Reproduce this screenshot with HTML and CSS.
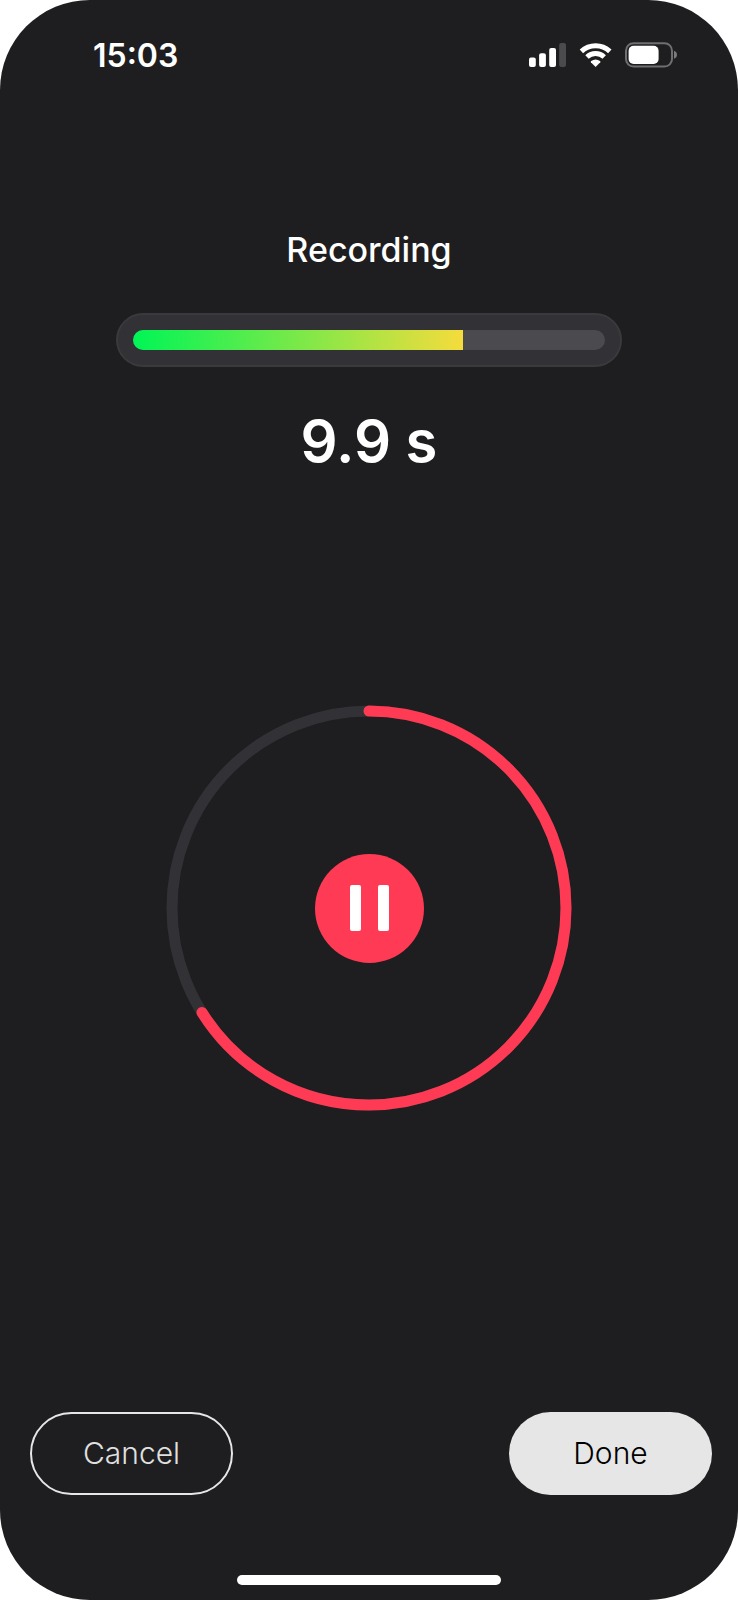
FILE: index.html
```
<!DOCTYPE html>
<html lang="en">
<head>
<meta charset="utf-8">
<meta name="viewport" content="width=device-width, initial-scale=1">
<title>Recording</title>
<link rel="stylesheet" href="styles.css">
</head>
<body>
<div class="screen">
  <header class="status-bar">
    <time class="clock">15:03</time>
    <div class="status-icons">
      <svg class="icon-signal" width="38" height="26" viewBox="0 0 38 26" aria-hidden="true">
        <rect x="0" y="15.4" width="6.8" height="9.6" rx="2"/>
        <rect x="10.1" y="11.2" width="6.8" height="13.8" rx="2"/>
        <rect x="20.2" y="6" width="6.8" height="19" rx="2"/>
        <rect class="dim" x="30.2" y="1" width="6.8" height="24" rx="2"/>
      </svg>
      <svg class="icon-wifi" width="34" height="26" viewBox="0 0 34 26" aria-hidden="true">
        <path class="arc" d="M2.4 9.3A20.8 20.8 0 0 1 30.8 9.3"/>
        <path class="arc" d="M8 15A12.6 12.6 0 0 1 25.2 15"/>
        <path d="M16.6 25 11.9 20.3Q11.5 19.7 12.2 19.1A7.4 7.4 0 0 1 21 19.1Q21.7 19.7 21.3 20.3Z"/>
      </svg>
      <svg class="icon-battery" width="52" height="26" viewBox="0 0 52 26" aria-hidden="true">
        <rect class="shell" x="1" y="1.2" width="46" height="23.4" rx="7.5"/>
        <rect x="3.6" y="3.8" width="30" height="18.2" rx="5"/>
        <path class="nub" d="M49 8.8Q52 10 52 12.8T49 16.8Z"/>
      </svg>
    </div>
  </header>

  <main class="recorder">
    <h1 class="title">Recording</h1>
    <div class="level" role="meter" aria-label="Input level" aria-valuemin="0" aria-valuemax="100" aria-valuenow="70">
      <div class="level-track">
        <div class="level-fill" style="width: 70%"></div>
      </div>
    </div>
    <p class="elapsed">9.9 s</p>

    <div class="dial">
      <svg class="dial-ring" viewBox="0 0 406 406" aria-hidden="true">
        <circle class="ring-track" cx="203" cy="203" r="197"/>
        <circle class="ring-value" cx="203" cy="203" r="197" pathLength="100" stroke-dasharray="66.1 100" transform="rotate(-90 203 203)"/>
      </svg>
      <button class="pause" type="button" aria-label="Pause">
        <span class="pause-bar"></span>
        <span class="pause-bar"></span>
      </button>
    </div>
  </main>

  <footer class="actions">
    <button class="action action-outline" type="button">Cancel</button>
    <button class="action action-solid" type="button">Done</button>
  </footer>
  <div class="home-indicator"></div>
</div>
</body>
</html>
```
FILE: styles.css
```
* {
  box-sizing: border-box;
}

body {
  margin: 0;
  background: #fff;
  font-family: Inter, "Liberation Sans", sans-serif;
  color: #fff;
}

button {
  padding: 0;
  border: 0;
  font: inherit;
  cursor: pointer;
}

.screen {
  display: flex;
  flex-direction: column;
  min-height: 100vh;
  border-radius: 90px;
  background: #1e1e20;
}

.status-bar {
  display: flex;
  align-items: flex-start;
  justify-content: space-between;
  padding: 35px 61px 0 93px;
}

.clock {
  font-size: 32px;
  font-weight: 600;
  line-height: 42px;
}

.status-icons {
  display: flex;
  align-items: center;
  gap: 12px;
  height: 40px;
  fill: #fff;
}

.dim {
  fill: #4b4b4d;
}

.arc {
  fill: none;
  stroke: #fff;
  stroke-width: 5;
}

.shell {
  fill: none;
  stroke: #6f6f71;
  stroke-width: 2;
}

.nub {
  fill: #7b7b7d;
}

.recorder {
  display: flex;
  flex-direction: column;
  align-items: center;
  padding: 152px 116px 48px;
}

.title {
  margin: 0;
  font-size: 34px;
  font-weight: 500;
  line-height: 42px;
}

.level {
  width: 100%;
  margin-top: 42px;
  padding: 15px;
  border: 2px solid #3a3a3d;
  border-radius: 27px;
  background: #323136;
}

.level-track {
  height: 20px;
  overflow: hidden;
  border-radius: 10px;
  background: #4b4a4f;
}

.level-fill {
  height: 100%;
  background: linear-gradient(90deg, #00f556, #f5dc3c);
}

.elapsed {
  margin: 38px 0 0;
  font-size: 58px;
  font-weight: 600;
  line-height: 72px;
}

.dial {
  display: grid;
  place-items: center;
  width: 100%;
  max-width: 406px;
  margin-top: 228px;
}

.dial > * {
  grid-area: 1 / 1;
}

.dial-ring {
  display: block;
  width: 100%;
}

.ring-track,
.ring-value {
  fill: none;
  stroke: #323136;
  stroke-width: 11;
}

.ring-value {
  stroke: #ff3a54;
  stroke-linecap: round;
}

.pause {
  display: flex;
  align-items: center;
  justify-content: center;
  gap: 17px;
  width: 109px;
  height: 109px;
  border-radius: 50%;
  background: #ff3a54;
}

.pause-bar {
  width: 11px;
  height: 46px;
  border-radius: 2px;
  background: #fff;
}

.actions {
  display: flex;
  justify-content: space-between;
  margin-top: auto;
  padding: 0 26px 0 30px;
}

.action {
  width: 203px;
  height: 83px;
  padding-bottom: 2px;
  border-radius: 42px;
  font-size: 30px;
  font-weight: 300;
}

.action-outline {
  border: 2px solid #e6e6e6;
  background: transparent;
  color: #e0e0e0;
}

.action-solid {
  background: #e6e6e6;
  color: #000;
}

.home-indicator {
  width: 264px;
  height: 10px;
  margin: 80px auto 15px;
  border-radius: 5px;
  background: #fff;
}
```
